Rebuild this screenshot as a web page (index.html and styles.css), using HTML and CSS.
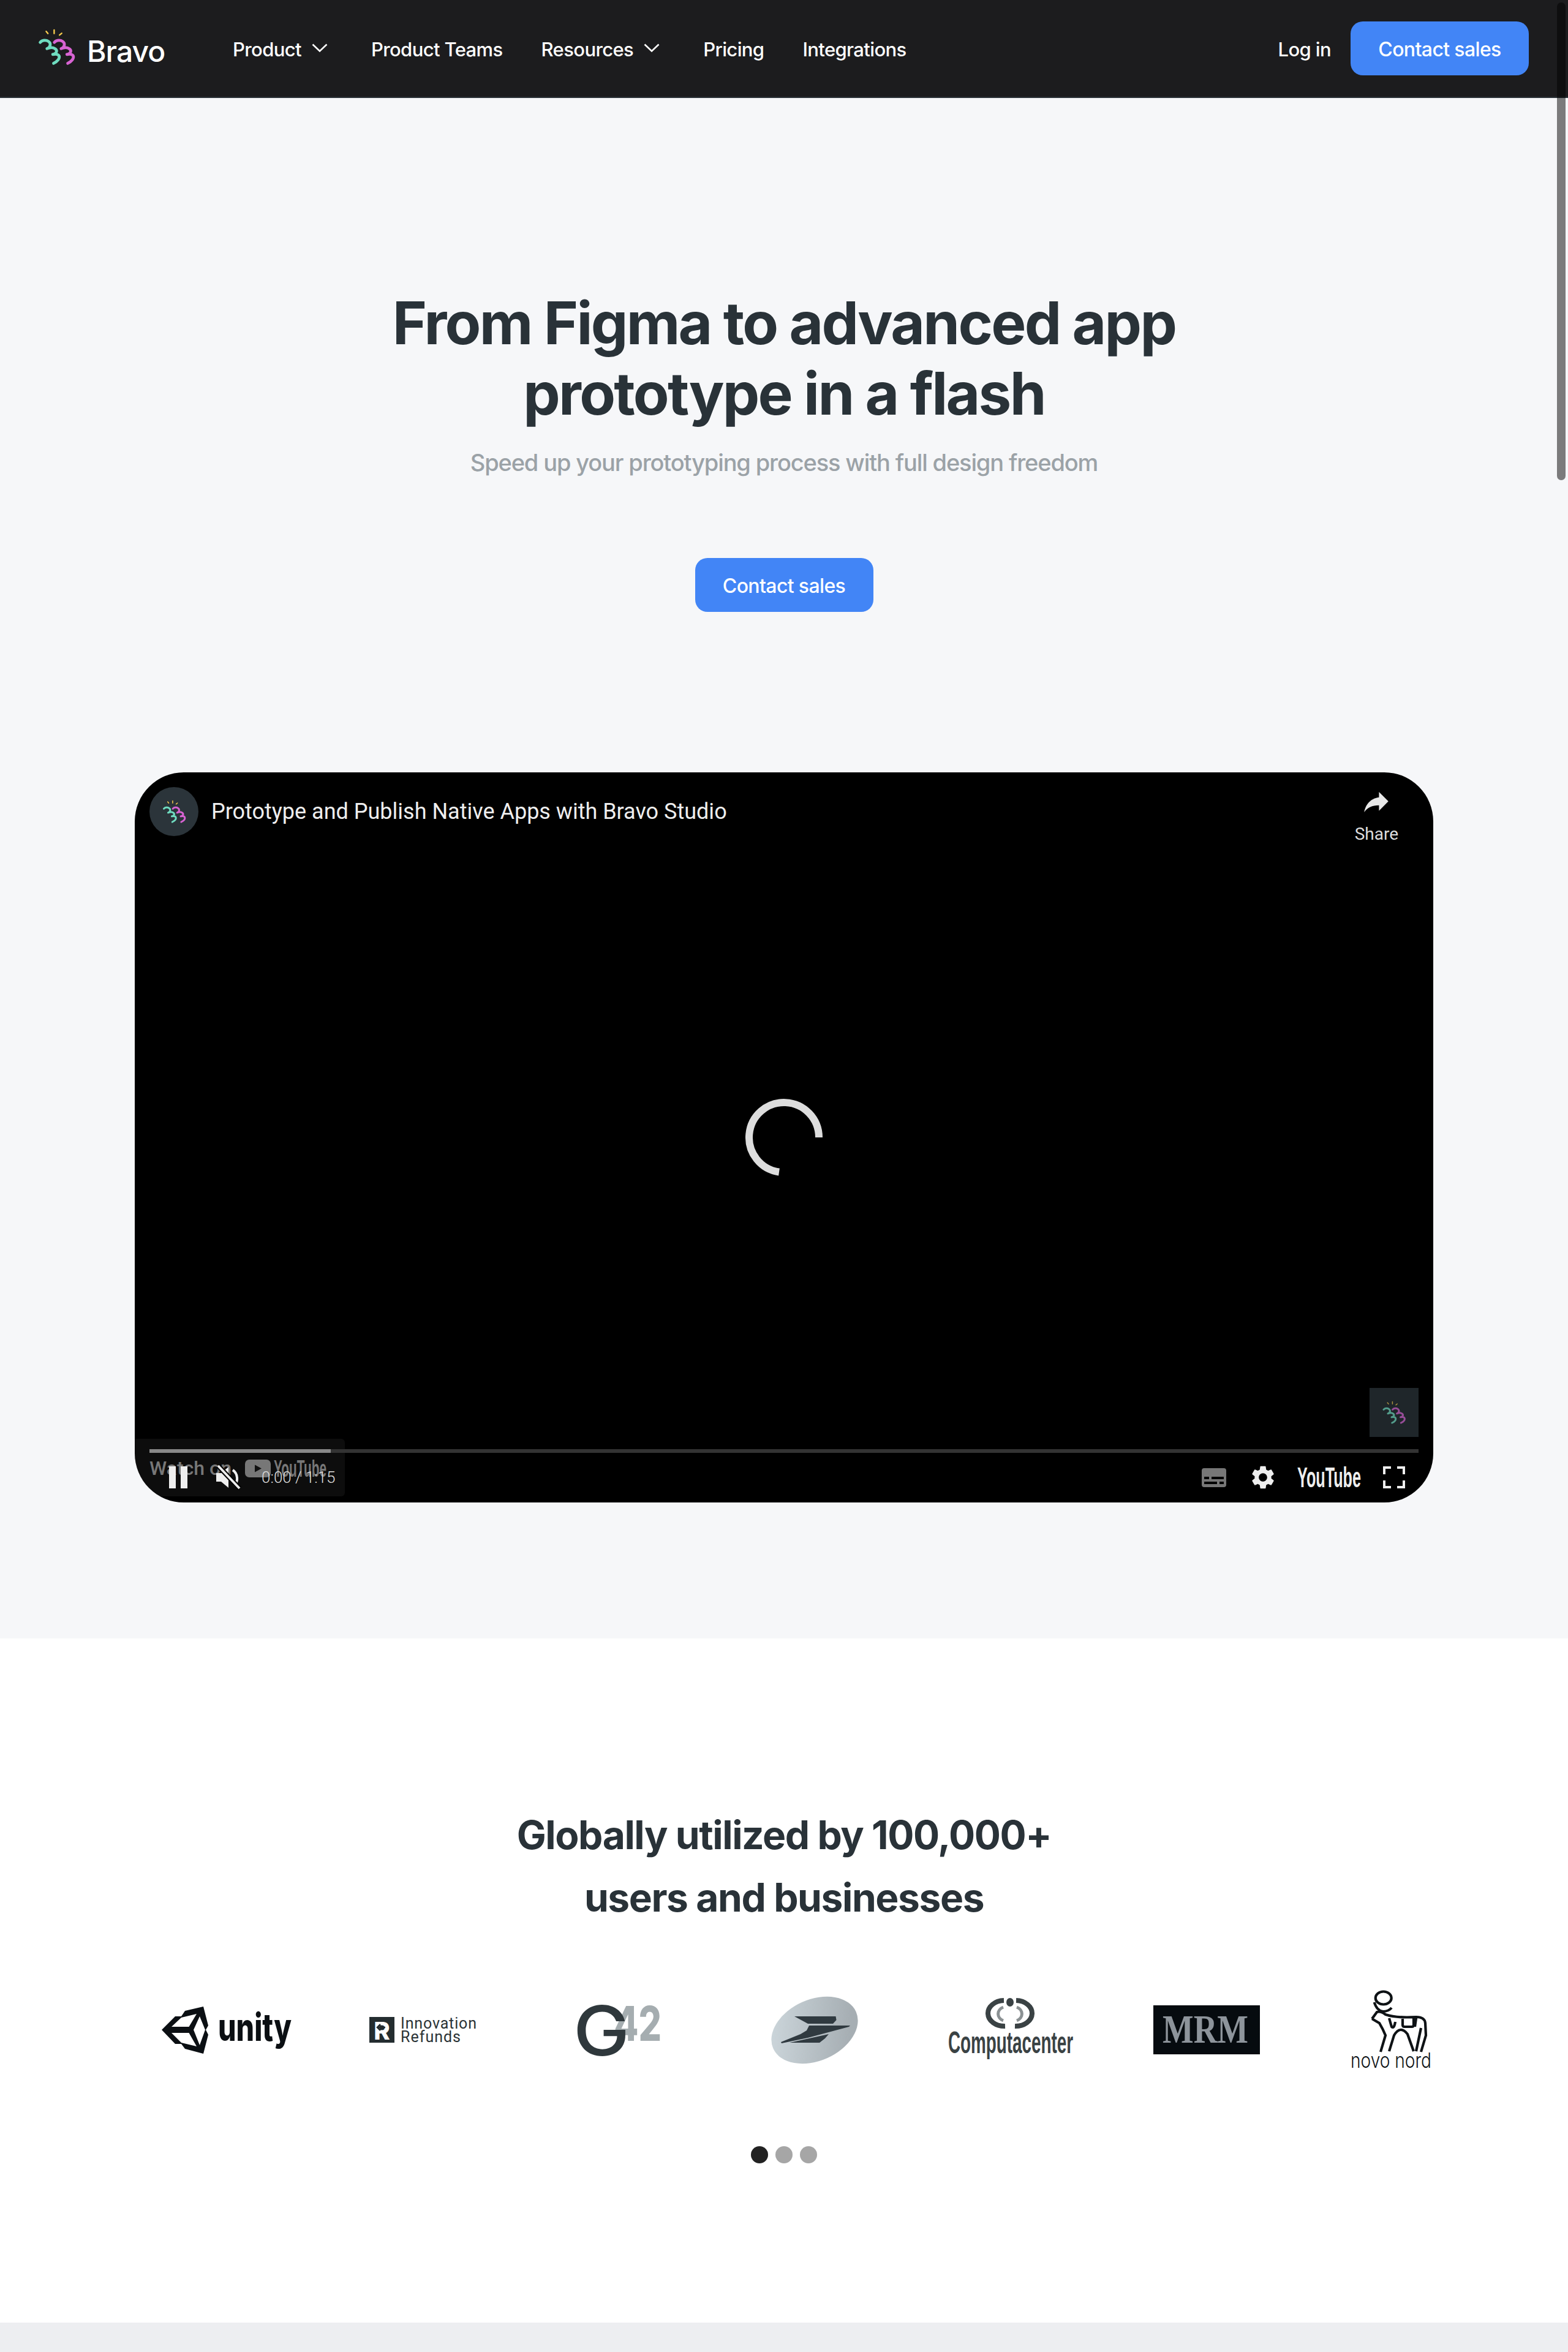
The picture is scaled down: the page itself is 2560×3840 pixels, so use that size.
FILE: index.html
```html
<!DOCTYPE html>
<html lang="en">
<head>
<meta charset="utf-8">
<title>Bravo Studio</title>
<link rel="stylesheet" href="styles.css">
</head>
<body>
<svg class="defs" width="0" height="0" aria-hidden="true">
  <defs>
    <g id="mark" fill="none" stroke-linecap="round" stroke-linejoin="round">
      <path class="spark" d="M7.2 2 9 4.2M15.4.6v3.6M23.2 4 21 5.8"/>
      <path class="teal" d="M1 13.4C3 11 7 10.6 9.6 12.4c2.6 1.8 2.6 5.6-1.6 7.4 3.2-1.4 7-1.4 9 .6 2 2 .6 4.6-3 5.4 3-.6 6-.2 6.6 1.8.6 2.4-1.6 5.4-5.8 7.4"/>
      <path class="pink" d="M15.6 13.4c2-2.4 6-2.8 8.6-1 2.6 1.8 2.6 5.6-1.6 7.4 3.2-1.4 7-1.4 9 .6 2 2 .6 4.6-3 5.4 3-.6 6-.2 6.6 1.8.6 2.4-1.6 5.4-5.8 7.4"/>
    </g>
    <linearGradient id="poste" x1="0" y1="0" x2="1" y2="0.35">
      <stop offset="0" stop-color="#d0dadf"/>
      <stop offset="1" stop-color="#a6aeb3"/>
    </linearGradient>
  </defs>
</svg>

<header class="topbar">
  <a class="brand">
    <svg class="brand-mark" viewBox="0 0 36 36"><use href="#mark"/></svg>
    <span class="brand-name">Bravo</span>
  </a>
  <nav class="nav">
    <a class="nav-link nav-drop">Product
      <svg class="chevron" viewBox="0 0 26 14"><path d="M1.5 1.5 13 12.5 24.5 1.5"/></svg>
    </a>
    <a class="nav-link">Product Teams</a>
    <a class="nav-link nav-drop">Resources
      <svg class="chevron" viewBox="0 0 26 14"><path d="M1.5 1.5 13 12.5 24.5 1.5"/></svg>
    </a>
    <a class="nav-link">Pricing</a>
    <a class="nav-link">Integrations</a>
  </nav>
  <div class="top-actions">
    <a class="nav-link">Log in</a>
    <a class="btn">Contact sales</a>
  </div>
</header>

<main>
  <section class="hero">
    <h1 class="hero-title">From Figma to advanced app<br>prototype in a flash</h1>
    <p class="hero-sub">Speed up your prototyping process with full design freedom</p>
    <a class="btn hero-btn">Contact sales</a>

    <div class="player">
      <div class="watch-on">
        <span class="watch-text">Watch on</span>
        <svg class="watch-logo" viewBox="0 0 134 30">
          <rect class="yt-box" x="0" y="0" width="42" height="29" rx="7"/>
          <path class="yt-play" d="M16 8.500 27 14.500 16 20.500z"/>
          <text class="yt-word" x="47" y="28" textLength="86" lengthAdjust="spacingAndGlyphs">YouTube</text>
        </svg>
      </div>

      <div class="player-top">
        <span class="avatar">
          <svg class="avatar-mark" viewBox="0 0 36 36"><use href="#mark"/></svg>
        </span>
        <span class="video-title">Prototype and Publish Native Apps with Bravo Studio</span>
        <span class="share">
          <svg class="share-icon" viewBox="8.700 6 20.100 16.800"><path d="M21 6l7.800 7.800L21 21.600v-4.500c-5.600 0-9.500 1.800-12.300 5.700 1.100-5.600 4.500-11.200 12.300-12.300z"/></svg>
          <span class="share-label">Share</span>
        </span>
      </div>

      <svg class="spinner" viewBox="0 0 128 128"><path d="M121 64A57 57 0 1 0 56 120.500"/></svg>

      <span class="watermark">
        <svg class="watermark-mark" viewBox="0 0 36 36"><use href="#mark"/></svg>
      </span>

      <div class="controls">
        <div class="progress"><span class="progress-loaded"></span></div>
        <div class="control-row">
          <div class="control-group">
            <svg class="pause" viewBox="0 0 30 36"><path d="M0 0h11v36H0zM19 0h11v36H19z"/></svg>
            <svg class="mute" viewBox="0 0 41 40">
              <path class="icon-fill" d="M0 13h8L20 3v34L8 27H0z"/>
              <path class="mute-wave" d="M27 8a17 17 0 0 1 2 26"/>
              <path class="mute-gap" d="M3 1 38 38"/>
              <path class="mute-slash" d="M3 1 38 38"/>
            </svg>
            <span class="time">0:00 / 1:15</span>
          </div>
          <div class="control-group control-right">
            <svg class="cc" viewBox="0 0 40 31">
              <rect class="cc-box" width="40" height="31" rx="4"/>
              <path class="cc-lines" d="M4 14h8v4H4zM16 14h20v4H16zM4 22h21v4H4zM29 22h7v4h-7z"/>
            </svg>
            <svg class="gear" viewBox="2.500 2 19 20"><path d="M19.140 12.940c.04-.3.06-.61.06-.94 0-.32-.02-.64-.07-.94l2.030-1.580c.18-.14.23-.41.12-.61l-1.920-3.320c-.12-.22-.37-.29-.59-.22l-2.390.96c-.5-.38-1.030-.7-1.620-.94l-.36-2.540c-.04-.24-.24-.41-.48-.41h-3.840c-.24 0-.43.17-.47.41l-.36 2.540c-.59.24-1.130.57-1.620.94l-2.390-.96c-.22-.08-.47 0-.59.22L2.740 8.870c-.12.21-.08.47.12.61l2.030 1.580c-.05.3-.09.63-.09.94s.02.64.07.94l-2.030 1.580c-.18.14-.23.41-.12.61l1.920 3.320c.12.22.37.29.59.22l2.390-.96c.5.38 1.030.7 1.620.94l.36 2.540c.05.24.24.41.48.41h3.840c.24 0 .44-.17.47-.41l.36-2.540c.59-.24 1.130-.56 1.620-.94l2.390.96c.22.08.47 0 .59-.22l1.920-3.320c.12-.22.07-.47-.12-.61l-2.010-1.580zM12 15.600c-1.980 0-3.600-1.620-3.600-3.600s1.620-3.600 3.600-3.600 3.600 1.620 3.600 3.600-1.620 3.600-3.600 3.600z"/></svg>
            <svg class="yt-mark" viewBox="0 0 104 34">
              <text class="yt-mark-text" x="0" y="33" textLength="104" lengthAdjust="spacingAndGlyphs">YouTube</text>
            </svg>
            <svg class="fullscreen" viewBox="0 0 36 36"><path d="M2 13V2h11M23 2h11v11M34 23v11H23M13 34H2V23"/></svg>
          </div>
        </div>
      </div>
    </div>
  </section>

  <section class="clients">
    <h2 class="clients-title">Globally utilized by 100,000+<br>users and businesses</h2>
    <div class="logos">
      <div class="logo-cell">
        <svg class="logo-unity" viewBox="0 0 212 77">
          <path class="ink" d="M0 38 22 16h10l6-9L68 0l8 31-4 7 4 8-8 31-30-8-6-8H22z"/>
          <path class="paper" d="M16 33 32 18l25-6-12.500 21zM62 16l9 22-9 25-10-25zM16 43h28.500L57 65l-25-6z"/>
          <text class="unity-word" x="92" y="56" textLength="120" lengthAdjust="spacingAndGlyphs">unity</text>
        </svg>
      </div>
      <div class="logo-cell">
        <svg class="logo-innov" viewBox="0 0 175 42">
          <rect class="innov-box" width="41" height="42"/>
          <text class="innov-r" x="20.500" y="37" text-anchor="middle">R</text>
          <path class="innov-arrow" d="M26 17H13M18 12l-5 5 5 5"/>
          <text class="innov-text" x="51" y="19" textLength="124">Innovation</text>
          <text class="innov-text" x="51" y="41" textLength="98">Refunds</text>
        </svg>
      </div>
      <div class="logo-cell">
        <svg class="logo-g42" viewBox="0 0 139 88">
          <text class="g42-42" x="61" y="62" textLength="78" lengthAdjust="spacingAndGlyphs">42</text>
          <text class="g42-g" x="-5" y="86" textLength="92" lengthAdjust="spacingAndGlyphs">G</text>
        </svg>
      </div>
      <div class="logo-cell">
        <svg class="logo-poste" viewBox="0 0 142 111">
          <ellipse cx="71" cy="55.500" rx="74" ry="50" fill="url(#poste)" transform="rotate(-24 71 55.500)"/>
          <path class="bird" d="M38 33h67.500l1 6-5.500 6H60zM62 48h67l-2 2-67 18-43 9-1-2 32-13 10-6zM30 76l64-14-6 7-9 7z"/>
        </svg>
      </div>
      <div class="logo-cell">
        <svg class="logo-compu" viewBox="0 0 204 104">
          <g class="compu-rings">
            <path class="ring-dark" d="M91 4A27 21 0 0 0 93 46"/>
            <path class="ring-dark" d="M111 4A27 21 0 0 1 109 46"/>
            <path class="ring-grey" d="M90 15A14 12 0 0 0 90 37"/>
            <path class="ring-grey" d="M112 15A14 12 0 0 1 112 37"/>
          </g>
          <ellipse class="compu-dot" cx="101" cy="7" rx="6" ry="7"/>
          <text class="compu-word" x="0" y="90" textLength="204" lengthAdjust="spacingAndGlyphs">Computacenter</text>
        </svg>
      </div>
      <div class="logo-cell">
        <svg class="logo-mrm" viewBox="0 0 174 80">
          <rect class="mrm-box" width="174" height="80"/>
          <text class="mrm-word" x="15" y="61" textLength="140" lengthAdjust="spacingAndGlyphs">MRM</text>
        </svg>
      </div>
      <div class="logo-cell">
        <svg class="logo-novo" viewBox="0 0 170 126">
          <g class="apis" transform="translate(35 0)">
            <ellipse cx="18.700" cy="11" rx="13" ry="10.500"/>
            <path d="M3.700 18Q8 32 18 33 27 33 32 27"/>
            <path d="M0 45 8 34q6-2 14 4 18 6 50 4 14 0 15 10l1 20-8 27M0 45l12 7q6 10 10 20l-8 27M28 98l8-26q10-17 22-2l10 28M80 60l-8 38M28 44l4 14q4 4 6-8M50 45v10q0 3 3 3h12q3 0 3-3V44M72 44l-2 14"/>
          </g>
          <text class="novo-word" x="0" y="125" textLength="132" lengthAdjust="spacingAndGlyphs">novo nord</text>
        </svg>
      </div>
    </div>
    <div class="dots">
      <span class="dot dot-active"></span>
      <span class="dot"></span>
      <span class="dot"></span>
    </div>
  </section>
  <div class="next-strip"></div>
</main>

<div class="scrollbar"></div>
</body>
</html>
```

FILE: styles.css
```css
* { box-sizing: border-box; }

html, body {
  margin: 0;
  padding: 0;
}

body {
  position: relative;
  height: 3840px;
  overflow: hidden;
  background: #fff;
  font-family: Inter, "Liberation Sans", sans-serif;
  color: #293238;
}

svg { overflow: visible; }

.defs { position: absolute; }

.spark { stroke: #f6cb4d; stroke-width: 1.5; }
.teal { stroke: #6fdcc0; stroke-width: 3; }
.pink { stroke: #d763d2; stroke-width: 3; }

/* header */
.topbar {
  display: flex;
  align-items: center;
  height: 160px;
  padding: 0 64px 0 63px;
  background: #1c1c1e;
  border-bottom: 2px solid #2b3238;
}

.brand {
  display: flex;
  align-items: center;
  width: 317px;
  gap: 20px;
  color: #fff;
}

.brand-mark {
  width: 59px;
  height: 57px;
  margin-top: -6px;
}

.brand-name {
  font-size: 48px;
  font-weight: 500;
  letter-spacing: -0.02em;
  line-height: 60px;
  margin-top: 9px;
}

.nav {
  display: flex;
  align-items: center;
  gap: 63px;
  flex: 1;
}

.nav-link {
  display: flex;
  align-items: center;
  padding-top: 3px;
  font-size: 31px;
  font-weight: 500;
  letter-spacing: -0.02em;
  color: #fff;
  white-space: nowrap;
}

.nav-drop { gap: 17px; padding-right: 8px; }

.chevron {
  width: 26px;
  height: 14px;
  margin-top: -6px;
  fill: none;
  stroke: #fff;
  stroke-width: 2.6;
}

.top-actions {
  display: flex;
  align-items: center;
  gap: 32px;
}

.btn {
  display: inline-flex;
  align-items: center;
  justify-content: center;
  height: 88px;
  width: 291px;
  padding-top: 2px;
  border-radius: 20px;
  background: #4285f6;
  color: #fff;
  font-size: 32px;
  font-weight: 500;
  letter-spacing: -0.02em;
}

/* hero */
.hero {
  display: flex;
  flex-direction: column;
  align-items: center;
  height: 2515px;
  padding-top: 310px;
  background: #f6f7f9;
}

.hero-title {
  margin: 0;
  font-size: 96px;
  line-height: 115px;
  font-weight: 700;
  letter-spacing: -0.028em;
  text-align: center;
  color: #293238;
}

.hero-sub {
  margin: 25px 0 0;
  font-size: 38px;
  line-height: 60px;
  font-weight: 500;
  letter-spacing: -0.03em;
  color: #9ba2a7;
}

.hero-btn { margin-top: 126px; }

/* video player */
.player {
  position: relative;
  display: flex;
  flex-direction: column;
  justify-content: space-between;
  flex: none;
  width: 2120px;
  height: 1192px;
  margin-top: 262px;
  border-radius: 80px;
  overflow: hidden;
  background: #000;
  font-family: Roboto, "Liberation Sans", sans-serif;
}

.player-top {
  display: flex;
  align-items: flex-start;
  padding: 24px 57px 0 24px;
}

.avatar {
  display: flex;
  align-items: center;
  justify-content: center;
  width: 80px;
  height: 80px;
  border-radius: 50%;
  background: #2b343a;
  flex: none;
}

.avatar-mark { width: 37px; height: 36px; }

.video-title {
  flex: 1;
  margin-left: 21px;
  font-size: 36px;
  line-height: 80px;
  color: #eee;
  white-space: nowrap;
}

.share {
  display: flex;
  flex-direction: column;
  align-items: center;
  gap: 20px;
  margin-top: 8px;
}

.share-icon { width: 40px; height: 33px; fill: #e8e8e8; }

.share-label {
  font-size: 28px;
  line-height: 32px;
  font-weight: 400;
  color: #ddd;
}

.spinner {
  position: absolute;
  left: 996px;
  top: 532px;
  width: 128px;
  height: 128px;
  fill: none;
  stroke: #ddd;
  stroke-width: 12;
}

.watermark {
  position: absolute;
  right: 24px;
  bottom: 107px;
  display: flex;
  align-items: center;
  justify-content: center;
  width: 80px;
  height: 80px;
  background: #1f262a;
}

.watermark-mark { width: 36px; height: 36px; opacity: .65; }

.watch-on {
  position: absolute;
  left: 0;
  bottom: 10px;
  display: flex;
  align-items: flex-start;
  gap: 22px;
  width: 343px;
  height: 94px;
  padding: 34px 0 0 24px;
  border-radius: 0 6px 6px 0;
  background: rgba(255, 255, 255, .05);
}

.watch-text {
  font-size: 32px;
  line-height: 28px;
  font-weight: 500;
  color: #777;
  white-space: nowrap;
}

.watch-logo {
  width: 134px;
  height: 30px;
}

.yt-box { fill: #777; }
.yt-play { fill: #111; }
.yt-word {
  font-family: "Liberation Sans Narrow", "Liberation Sans", sans-serif;
  font-size: 38px;
  font-weight: 700;
  fill: #777;
}

.controls { position: relative; }

.progress {
  height: 6px;
  margin: 0 24px;
  background: #333;
}

.progress-loaded {
  display: block;
  width: 296px;
  height: 100%;
  background: #888;
}

.control-row {
  display: flex;
  align-items: center;
  justify-content: space-between;
  height: 80px;
  margin-bottom: 1px;
  padding: 0 46px 0 56px;
}

.control-group {
  display: flex;
  align-items: center;
}

.pause { width: 30px; height: 36px; fill: #eee; }

.mute { width: 41px; height: 40px; margin-left: 47px; }
.icon-fill { fill: #eee; }
.mute-wave { fill: none; stroke: #eee; stroke-width: 4; }
.mute-gap { stroke: #000; stroke-width: 8; }
.mute-slash { stroke: #eee; stroke-width: 4; }

.time {
  margin-left: 33px;
  font-size: 26px;
  font-weight: 300;
  color: #ddd;
  white-space: nowrap;
}

.cc { width: 40px; height: 31px; }
.cc-box { fill: #777; }
.cc-lines { fill: #000; }

.gear { width: 36px; height: 38px; margin-left: 42px; fill: #eee; }

.yt-mark { width: 104px; height: 34px; margin-left: 38px; }
.yt-mark-text {
  font-family: "Liberation Sans Narrow", "Liberation Sans", sans-serif;
  font-size: 46px;
  font-weight: 700;
  fill: #eee;
}

.fullscreen {
  width: 36px;
  height: 36px;
  margin-left: 36px;
  fill: none;
  stroke: #eee;
  stroke-width: 4;
}

/* clients */
.clients {
  display: flex;
  flex-direction: column;
  align-items: center;
  height: 1117px;
  padding-top: 270px;
  background: #fff;
}

.clients-title {
  margin: 0;
  font-size: 64px;
  line-height: 102px;
  font-weight: 700;
  letter-spacing: -0.022em;
  text-align: center;
  color: #293238;
}

.logos {
  display: flex;
  align-items: center;
  align-self: flex-start;
  height: 130px;
  margin-top: 100px;
  padding-left: 210px;
}

.logo-cell {
  display: flex;
  align-items: center;
  justify-content: center;
  flex: none;
  width: 320px;
}

.logo-unity { width: 212px; height: 77px; }
.ink { fill: #0b0f13; }
.paper { fill: #fff; }
.unity-word {
  font-size: 62px;
  font-weight: 800;
  fill: #0b0f13;
}

.logo-innov { width: 175px; height: 42px; }
.innov-box { fill: #242d30; }
.innov-r {
  font-size: 40px;
  font-weight: 800;
  fill: #fff;
}
.innov-arrow {
  fill: none;
  stroke: #242d30;
  stroke-width: 2.5;
}
.innov-text {
  font-family: Roboto, sans-serif;
  font-size: 25px;
  fill: #2b3336;
}

.logo-g42 { width: 139px; height: 88px; }
.g42-g {
  font-size: 112px;
  font-weight: 500;
  fill: #2f383c;
}
.g42-42 {
  font-size: 78px;
  font-weight: 800;
  fill: #a5adb0;
}

.logo-poste { width: 142px; height: 111px; }
.bird { fill: #303a40; }

.logo-compu { width: 204px; height: 104px; }
.ring-dark { fill: none; stroke: #3a4244; stroke-width: 8; }
.ring-grey { fill: none; stroke: #8b9193; stroke-width: 5; }
.compu-dot { fill: #3a4244; }
.compu-word {
  font-family: "Liberation Sans Narrow", "Liberation Sans", sans-serif;
  font-size: 50px;
  font-weight: 700;
  fill: #3a4244;
}

.logo-mrm { width: 174px; height: 80px; }
.mrm-box { fill: #060b0f; }
.mrm-word {
  font-family: "Liberation Serif", serif;
  font-size: 65px;
  font-weight: 700;
  fill: #8d949b;
}

.logo-novo { width: 170px; height: 126px; }
.apis {
  fill: none;
  stroke: #0e1215;
  stroke-width: 4.2;
}
.novo-word {
  font-size: 34px;
  font-weight: 300;
  fill: #0e1215;
}

.dots {
  display: flex;
  gap: 12px;
  margin-top: 125px;
}

.dot {
  width: 28px;
  height: 28px;
  border-radius: 50%;
  background: #a6a6a6;
}

.dot-active { background: #222; }

.next-strip {
  height: 48px;
  background: #edeef1;
}

.scrollbar {
  position: absolute;
  top: 4px;
  right: 4px;
  width: 14px;
  height: 780px;
  border-radius: 7px;
  background: rgba(0, 0, 0, .5);
}
```
